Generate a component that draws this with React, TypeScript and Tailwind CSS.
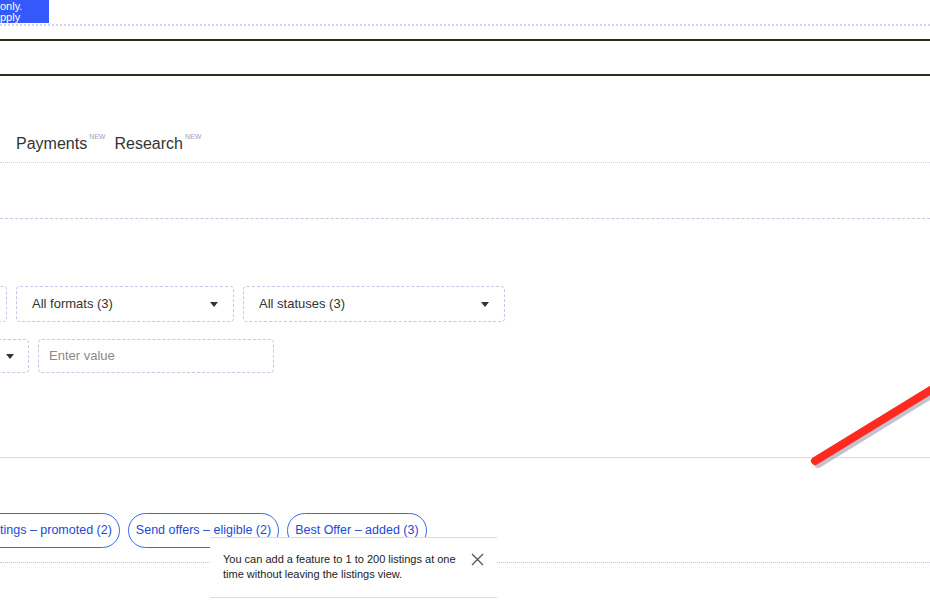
import React from 'react'

const Caret = () => (
  <svg width="8" height="5" viewBox="0 0 8 5" className="shrink-0">
    <path d="M0 0h8L4 5z" fill="#333" />
  </svg>
)

const Select = ({ label, className }: { label: string; className: string }) => (
  <div
    className={`h-[36px] shrink-0 flex items-center justify-between pl-[15px] pr-[15px] border border-dashed border-[#c9c7e8] rounded-[4px] text-[13px] text-[#333] ${className}`}
  >
    <span>{label}</span>
    <Caret />
  </div>
)

const chips = ['tings – promoted (2)', 'Send offers – eligible (2)', 'Best Offer – added (3)']

export default function App() {
  return (
    <div className="relative w-[930px] h-[611px] overflow-hidden bg-white font-['Liberation_Sans',Arial,sans-serif]">
      {/* top notice strip */}
      <div className="h-[24px] flex">
        <div className="w-[49px] h-[23px] bg-[#3558fb] text-white text-[11px] leading-[11px] pt-[1px] overflow-hidden whitespace-nowrap">
          <div>only.</div>
          <div>pply</div>
        </div>
      </div>
      <div className="border-b-2 border-dotted border-[#d2d2fb]" />
      <div className="mt-[13px] border-t-2 border-[#2e2e1c]" />
      <div className="mt-[33px] border-t-2 border-[#2e2e1c]" />

      {/* tabs */}
      <div className="mt-[58px] h-[29px] pl-[16px] flex items-start gap-[9px] border-b border-dotted border-[#cfcff5]">
        {['Payments', 'Research'].map((t) => (
          <div key={t} className="flex items-start">
            <span className="text-[16px] leading-[20px] text-[#333]">{t}</span>
            <span className="ml-[2px] -mt-[1px] text-[7px] leading-[8px] text-[#9d9cc4]">NEW</span>
          </div>
        ))}
      </div>
      <div className="mt-[55px] border-b border-dashed border-[#c6c6e2]" />

      {/* filters */}
      <div className="mt-[67px] flex gap-[9px]">
        <Select label="" className="w-[200px] -ml-[193px]" />
        <Select label="All formats (3)" className="w-[218px]" />
        <Select label="All statuses (3)" className="w-[262px]" />
      </div>
      <div className="mt-[17px] flex gap-[9px]">
        <div className="h-[34px] w-[200px] -ml-[171px] shrink-0 flex items-center justify-end pr-[14px] border border-dashed border-[#c9c7e8] rounded-[4px]">
          <Caret />
        </div>
        <div className="h-[34px] w-[236px] shrink-0 flex items-center pl-[10px] border border-dashed border-[#c9c7e8] rounded-[4px] text-[13px] text-[#8a8a8a]">
          Enter value
        </div>
      </div>
      <div className="mt-[84px] border-b border-[#d9d9f2]" />

      {/* chips */}
      <div className="mt-[55px] flex gap-[8px] -ml-[8px]">
        {chips.map((c, i) => (
          <div
            key={c}
            className={`h-[35px] shrink-0 flex items-center px-[7px] border border-[#3a68f0] text-[12.5px] text-[#1a4ad8] whitespace-nowrap ${
              i === 0 ? 'rounded-r-full' : 'rounded-full'
            }`}
          >
            {c}
          </div>
        ))}
      </div>
      <div className="mt-[14px] border-b border-dotted border-[#c2c2e2]" />

      {/* tooltip */}
      <div className="absolute left-[210px] top-[537px] w-[287px] h-[61px] bg-white border-t border-[#d9d9f2] border-b border-b-dotted">
        <div className="flex items-start justify-between pl-[13px] pr-[13px] pt-[14px]">
          <p className="w-[240px] text-[11px] leading-[15px] text-[#222]">
            You can add a feature to 1 to 200 listings at one time without leaving the listings view.
          </p>
          <svg width="13" height="13" viewBox="0 0 13 13" className="mt-[1px]">
            <path d="M1 1l11 11M12 1L1 12" stroke="#555" strokeWidth="1.3" />
          </svg>
        </div>
      </div>

      {/* red annotation stroke */}
      <svg className="absolute left-[800px] top-[370px]" width="140" height="110" viewBox="0 0 140 110">
        <line x1="18" y1="94" x2="142" y2="18" stroke="#9a9ab4" strokeWidth="8" strokeLinecap="round" opacity="0.6" />
        <line x1="15" y1="91" x2="139" y2="15" stroke="#ff2a1f" strokeWidth="8" strokeLinecap="round" />
      </svg>
    </div>
  )
}
